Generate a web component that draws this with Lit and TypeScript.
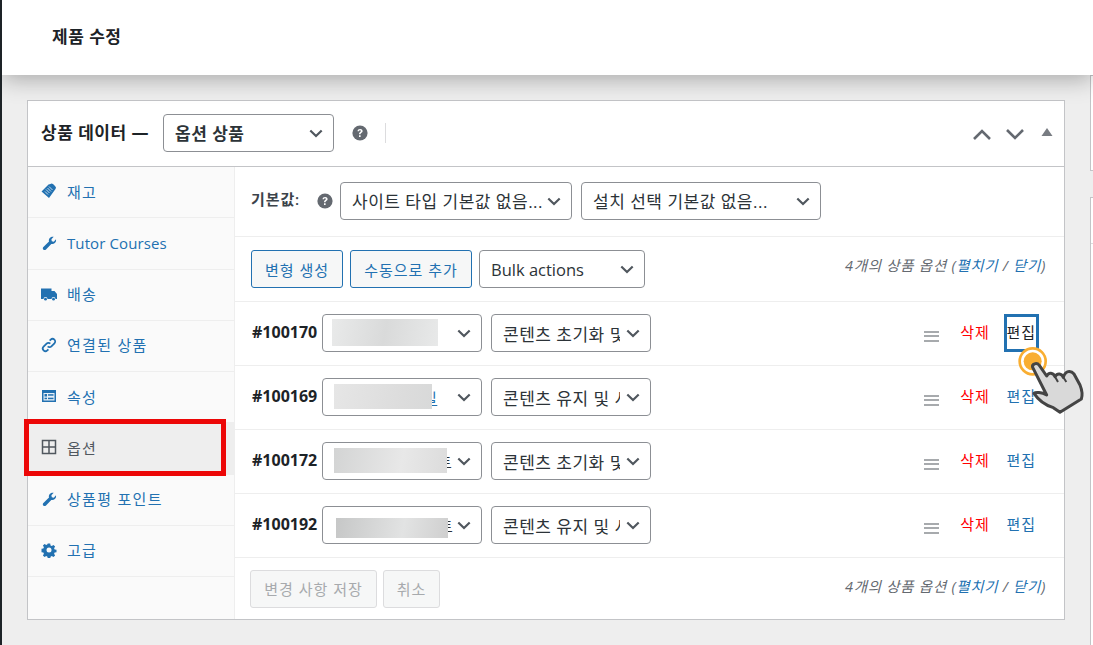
import { LitElement, html, css, svg } from "lit";
import { customElement } from "lit/decorators.js";

const chevron = html`<svg class="chev" viewBox="0 0 14 9" width="14" height="9"><path d="M1.300 1.500 7 7l5.700-5.500" fill="none" stroke="#50575e" stroke-width="2.200"/></svg>`;
const help = html`<svg class="help" viewBox="0 0 16 16" width="16" height="16"><circle cx="8" cy="8" r="7.600" fill="#646970"/><path d="M5.500 6.200C5.600 4.700 6.700 4 8.100 4c1.500 0 2.500.8 2.500 2 0 1-.6 1.500-1.300 2-.5.4-.8.7-.8 1.300H7c0-1.100.4-1.700 1.100-2.200.5-.4.8-.6.8-1.100 0-.5-.4-.8-.9-.8-.6 0-1 .4-1.050 1zM7 10.200h1.600V12H7z" fill="#fff"/></svg>`;

const icons: Record<string, unknown> = {
  tag: svg`<path d="M.5 8.500 7.500 1.500l2-.5 1-.5 1.500.5 2 2 1 1.500-.5 1.500L8 15z" fill="#2271b1"/><path d="M5 6.500l3.500 3.500M6.500 5l3.500 3.500M8 3.500l3.500 3.500M4 8.500l3 3" stroke="#d5e4f0" stroke-width=".9"/>`,
  wrench: svg`<path d="M15 4.200c.3 1.500-.1 3-1.200 3.900-1 .9-2.300 1.100-3.500.8L5 14.500c-.8.8-2.100.8-2.700.1-.7-.7-.6-1.900.1-2.600L8 6.500c-.4-1.200-.1-2.500.8-3.500C9.800 2 11.200 1.500 12.700 1.800L10.400 4.300l.4 2 2 .4z" fill="#2271b1"/>`,
  truck: svg`<path d="M0 2.500h10.500v2.500H13.500L16 8V13h-1.500a2 2 0 0 0-4 0h-4a2 2 0 0 0-4 0H0z" fill="#2271b1"/><circle cx="4.500" cy="13.200" r="1.400" fill="#2271b1"/><circle cx="12.500" cy="13.200" r="1.400" fill="#2271b1"/>`,
  link: svg`<g fill="none" stroke="#2271b1" stroke-width="1.800"><path d="M6.700 9.300a2.600 2.600 0 0 0 3.700 0l3-3a2.600 2.600 0 0 0-3.700-3.700L8.700 3.700"/><path d="M9.300 6.700a2.600 2.600 0 0 0-3.700 0l-3 3a2.600 2.600 0 0 0 3.700 3.700l1.100-1.100"/></g>`,
  form: svg`<rect x="1" y="2" width="14" height="12" fill="#2271b1"/><rect x="2.500" y="5" width="11" height="7.500" fill="#e8f0f7"/><rect x="3.500" y="6" width="2.500" height="2.500" fill="#2271b1"/><rect x="7" y="6.200" width="5.500" height="1.500" fill="#2271b1"/><rect x="3.500" y="9.700" width="2.500" height="1.500" fill="#2271b1"/><rect x="7" y="9.700" width="5.500" height="1.500" fill="#2271b1"/>`,
  grid: svg`<g fill="none" stroke="#50575e" stroke-width="1.500"><rect x="1.500" y="1.500" width="13" height="13"/><path d="M8 1.500v13M1.500 8h13"/></g>`,
  gear: svg`<path d="M6.700 1h2.600l.4 2 1.300.6 1.800-1.100 1.800 1.800-1.100 1.800.6 1.300 2 .4v2.600l-2 .4-.6 1.300 1.100 1.800-1.800 1.800-1.800-1.100-1.300.6-.4 2H6.700l-.4-2-1.300-.6-1.800 1.100-1.800-1.800 1.100-1.800-.6-1.300-2-.4V6.700l2-.4.6-1.300-1.100-1.800 1.800-1.800 1.800 1.100 1.300-.6z" transform="translate(.6 .6) scale(.925)" fill="#2271b1"/><circle cx="8" cy="8" r="2.500" fill="#fafafa"/>`,
};

const tabs = [
  { icon: "tag", label: "재고" },
  { icon: "wrench", label: "Tutor Courses", latin: true },
  { icon: "truck", label: "배송" },
  { icon: "link", label: "연결된 상품" },
  { icon: "form", label: "속성" },
  { icon: "grid", label: "옵션", active: true },
  { icon: "wrench", label: "상품평 포인트" },
  { icon: "gear", label: "고급" },
];

const rows = [
  { id: "#100170", opt: "콘텐츠 초기화 및 서비스", left: 10, w: 106, h: 27, top: 5, grad: "100deg,#e9eaea,#d9dada 50%,#e8e9e9", peek: "", peekLink: false, focus: true },
  { id: "#100169", opt: "콘텐츠 유지 및 서비스", left: 12, w: 98, h: 25, top: 6, grad: "100deg,#e6e6e6,#dcdcdc 70%,#d8d9d9", peek: "일", peekLink: true },
  { id: "#100172", opt: "콘텐츠 초기화 및 서비스", left: 12, w: 113, h: 25, top: 6, grad: "100deg,#d3d4d4,#e8e8e8 60%,#dcdcdc", peek: "트", peekLink: false },
  { id: "#100192", opt: "콘텐츠 유지 및 서비스", left: 14, w: 112, h: 20, top: 12, grad: "100deg,#c6c7c7,#e2e3e3 60%,#cfcfcf", peek: "트", peekLink: false },
];

@customElement("app-root")
export class AppRoot extends LitElement {
  static styles = css`
    :host {
      display: block; position: relative; width: 1093px; height: 645px; overflow: hidden; box-sizing: border-box;
      background: #eee; border-left: 2px solid #1d2327;
      font-family: "Open Sans", "Noto Sans CJK KR", sans-serif; font-size: 15px; color: #1d2327;
    }
    * { box-sizing: border-box; }
    .top { height: 75px; background: #fff; padding: 0 0 4px 50px; display: flex; align-items: center; font-size: 17px; letter-spacing: .5px; font-weight: 700; box-shadow: 0 4px 22px rgba(0,0,0,.3); position: relative; z-index: 1; }
    .main { display: flex; padding: 25px 0 0 25px; gap: 25px; }
    .sidecol { flex: 0 0 30px; margin-top: -25px; display: flex; flex-direction: column; gap: 26px; }
    .box { background: #fff; border: 1px solid #c3c4c7; }
    .box.a { height: 96px; }
    .box.b { height: 460px; }
    .box.b div { height: 46px; border-bottom: 1px solid #dcdcde; }
    .card { flex: 0 0 1038px; height: 520px; background: #fff; border: 1px solid #c3c4c7; display: flex; flex-direction: column; }
    .head { height: 66px; flex: none; border-bottom: 1px solid #c3c4c7; display: flex; align-items: center; padding: 0 8px 2px 13px; font-size: 17px; letter-spacing: .5px; font-weight: 700; }
    .head .title { width: 122px; white-space: nowrap; margin-bottom: 3px; }
    .head .sel { width: 171px; font-weight: 600; font-size: 17px; letter-spacing: .5px; }
    .head .help { margin-left: 18px; }
    .divider { width: 1px; height: 20px; background: #dcdcde; margin-left: 17px; }
    .ctrl { margin-left: auto; display: flex; align-items: center; gap: 15px; padding-top: 3px; }
    .tri { margin: 0 3px 5px 2px; }
    .sel { position: relative; height: 38px; flex: none; background: #fff; border: 1px solid #8c8f94; border-radius: 4px; display: flex; align-items: center; padding-left: 11px; font-size: 17px; letter-spacing: .5px; white-space: nowrap; color: #2c3338; overflow: hidden; }
    .sel.latin { font-size: 16.500px; letter-spacing: 0; }
    .sel .txt { overflow: hidden; min-width: 0; }
    .sel .chev { position: absolute; right: 10px; top: 14px; }
    .body { flex: 1; display: flex; min-height: 0; }
    .tabs { flex: 0 0 207px; background: #fafafa; border-right: 1px solid #eee; }
    .tab { position: relative; height: 51.250px; border-bottom: 1px solid #eee; display: flex; align-items: center; padding: 0 0 2px 13px; gap: 10px; color: #2271b1; font-size: 15px; letter-spacing: 1.300px; white-space: nowrap; }
    .tab.latin { letter-spacing: .1px; padding-bottom: 0; }
    .tab svg { flex: none; }
    .tab.active { background: #eee; color: #50575e; }
    .tab.active::after { content: ""; position: absolute; left: -4px; right: 8px; top: -4px; bottom: -2px; border: 5px solid #ec0707; }
    .panel { flex: 1; min-width: 0; display: flex; flex-direction: column; }
    .defaults { height: 70px; flex: none; border-bottom: 1px solid #eee; display: flex; align-items: center; padding: 0 0 2px 16px; }
    .defaults .lbl { font-weight: 600; color: #3c434a; width: 66px; font-size: 15px; letter-spacing: .9px; margin-bottom: 4px; }
    .defaults .help { margin-right: 7px; }
    .defaults .sel { margin-right: 9px; }
    .toolbar { height: 65px; flex: none; border-bottom: 1px solid #eee; display: flex; align-items: center; padding-left: 16px; gap: 7px; }
    .btn { height: 38px; flex: none; background: #f6f7f7; border: 1px solid #2271b1; border-radius: 3px; color: #2271b1; display: flex; align-items: center; justify-content: center; font-size: 15px; letter-spacing: 1px; white-space: nowrap; }
    .btn.off { border-color: #dcdcde; color: #a7aaad; }
    .count { margin-left: auto; padding: 0 18px 7px 0; font-style: italic; font-size: 14.500px; letter-spacing: .7px; color: #646970; white-space: nowrap; }
    .count a { color: #2271b1; }
    .toolbar .count { padding-bottom: 9px; }
    .row { height: 64px; flex: none; border-bottom: 1px solid #eee; display: flex; align-items: center; padding: 0 0 1px 17px; }
    .row .id { width: 70px; font-weight: 700; font-size: 16px; margin-bottom: 3px; }
    .row .sel { width: 160px; padding-right: 30px; }
    .row .sel + .sel { margin-left: 9px; }
    .blur { position: absolute; }
    .peek { position: absolute; font-size: 15px; color: #2c3338; }
    .peek.lnk { color: #2271b1; text-decoration: underline; }
    .acts { margin-left: auto; display: flex; align-items: center; padding: 0 28px 1px 0; font-size: 15px; letter-spacing: .9px; line-height: 19px; }
    .menu { width: 15px; height: 11px; border-top: 2px solid #a7aaad; border-bottom: 2px solid #a7aaad; position: relative; margin-top: 7px; }
    .menu::after { content: ""; position: absolute; left: 0; right: 0; top: 2.500px; height: 2px; background: #a7aaad; }
    .del { color: #f00; margin-left: 21px; }
    .edit { color: #2271b1; margin-left: 17px; }
    .row.focus .edit { color: #1d2327; outline: 3px solid #2271b1; padding: 6.500px 0; }
    .foot { flex: 1; display: flex; align-items: center; padding-left: 15px; gap: 6px; }
    .hand { position: absolute; left: 998px; top: 330px; z-index: 2; }
  `;

  render() {
    return html`
      <div class="top">제품 수정</div>
      <div class="main">
        <section class="card">
          <div class="head">
            <span class="title">상품 데이터 —</span>
            <div class="sel"><span class="txt">옵션 상품</span>${chevron}</div>
            ${help}
            <span class="divider"></span>
            <div class="ctrl">
              <svg width="18" height="11" viewBox="0 0 18 11"><path d="M1 10l8-8 8 8" fill="none" stroke="#646970" stroke-width="2.600"/></svg>
              <svg width="18" height="11" viewBox="0 0 18 11"><path d="M1 1l8 8 8-8" fill="none" stroke="#646970" stroke-width="2.600"/></svg>
              <svg class="tri" width="12" height="8" viewBox="0 0 12 8"><path d="M6 0l5.500 8H.5z" fill="#787c82"/></svg>
            </div>
          </div>
          <div class="body">
            <nav class="tabs">
              ${tabs.map((t) => html`<div class="tab ${t.active ? "active" : ""} ${t.latin ? "latin" : ""}"><svg width="16" height="16" viewBox="0 0 16 16">${icons[t.icon]}</svg><span>${t.label}</span></div>`)}
            </nav>
            <div class="panel">
              <div class="defaults">
                <span class="lbl">기본값:</span>${help}
                <div class="sel" style="width:232px"><span class="txt">사이트 타입 기본값 없음...</span>${chevron}</div>
                <div class="sel" style="width:240px"><span class="txt">설치 선택 기본값 없음...</span>${chevron}</div>
              </div>
              <div class="toolbar">
                <div class="btn" style="width:92px">변형 생성</div>
                <div class="btn" style="width:122px">수동으로 추가</div>
                <div class="sel latin" style="width:166px"><span class="txt">Bulk actions</span>${chevron}</div>
                <div class="count">4개의 상품 옵션 (<a>펼치기</a> / <a>닫기</a>)</div>
              </div>
              ${rows.map((r) => html`
                <div class="row ${r.focus ? "focus" : ""}">
                  <span class="id">${r.id}</span>
                  <div class="sel">
                    <span class="peek ${r.peekLink ? "lnk" : ""}" style="left:${r.left + r.w - 10}px">${r.peek}</span>
                    <div class="blur" style="left:${r.left - 1}px;top:${r.top - 1}px;width:${r.w}px;height:${r.h}px;background:linear-gradient(${r.grad})"></div>
                    ${chevron}
                  </div>
                  <div class="sel"><span class="txt">${r.opt}</span>${chevron}</div>
                  <div class="acts"><span class="menu"></span><span class="del">삭제</span><span class="edit">편집</span></div>
                </div>`)}
              <div class="foot">
                <div class="btn off" style="width:127px">변경 사항 저장</div>
                <div class="btn off" style="width:57px">취소</div>
                <div class="count">4개의 상품 옵션 (<a>펼치기</a> / <a>닫기</a>)</div>
              </div>
            </div>
          </div>
        </section>
        <div class="sidecol"><div class="box a"></div><div class="box b"><div></div></div></div>
      </div>
      <svg class="hand" width="93" height="90" viewBox="0 0 279 270">
        <circle cx="98" cy="94" r="39" fill="#fff" stroke="#f9ae32" stroke-width="8"/>
        <circle cx="98" cy="94" r="27" fill="#f9ae32"/>
        <path d="M98 112C95 102 110 96 118 106L140 138C146 126 160 128 165 140C172 128 185 130 190 142C196 122 212 120 222 132L240 165C246 180 248 195 244 207L180 247L160 233C135 225 115 210 102 190C106 186 125 186 140 195Z" fill="#d9d9d9" stroke="#444" stroke-width="9" stroke-linejoin="round"/>
        <path d="M165 140l9 16M190 142l9 14" stroke="#444" stroke-width="6" fill="none"/>
      </svg>
    `;
  }
}
